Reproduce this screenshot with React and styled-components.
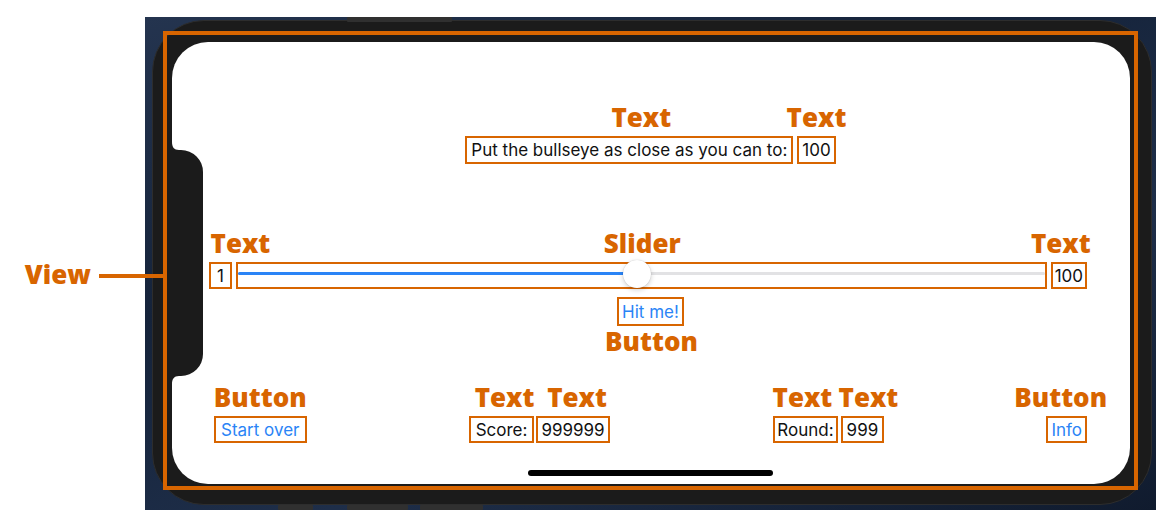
import React from "react";
import styled, { createGlobalStyle } from "styled-components";

const ORANGE = "#d86500";
const BLUE = "#2a84f6";

const GlobalStyle = createGlobalStyle`
  html, body {
    margin: 0;
    padding: 0;
    background: #fff;
  }
  body {
    font-family: "Inter", "Liberation Sans", sans-serif;
  }
`;

const Page = styled.div`
  width: 1156px;
  height: 510px;
  box-sizing: border-box;
  padding: 17px 0 0 145px;
  overflow: hidden;
`;

const Backdrop = styled.div`
  height: 100%;
  box-sizing: border-box;
  padding: 3px 0 0 7px;
  background: linear-gradient(160deg, #24344f 0%, #15233a 35%, #1e2e49 65%, #101b2e 100%);
`;

const Phone = styled.div`
  position: relative;
  width: 1000px;
  height: 485px;
  box-sizing: border-box;
  padding: 10px 13px 14px 10px;
  background: #1b1b1b;
  border: 1px solid #2d2d2d;
  border-radius: 52px;
`;

const SideButton = styled.div`
  position: absolute;
  left: ${(p) => p.$left}px;
  width: ${(p) => p.$width}px;
  height: 5px;
  background: #303030;
  border-radius: 1px;
  ${(p) => (p.$bottom ? "bottom: -6px;" : "top: -4px;")}
`;

const Frame = styled.div`
  position: relative;
  height: 100%;
  box-sizing: border-box;
  padding: 7px 4px 2px 5px;
  border: 4px solid ${ORANGE};
`;

const Screen = styled.div`
  position: relative;
  height: 100%;
  box-sizing: border-box;
  padding: 0 43px 0 42px;
  display: flex;
  flex-direction: column;
  background: #fff;
  border-radius: 36px;
`;

const Notch = styled.svg`
  position: absolute;
  left: 0;
  top: 100px;
`;

const Callout = styled.div`
  position: absolute;
  right: calc(100% + 4px);
  top: 228px;
  display: flex;
  align-items: center;
  gap: 8px;
`;

const CalloutLine = styled.div`
  width: 64px;
  height: 4px;
  background: ${ORANGE};
`;

const Label = styled.span`
  font-family: "Open Sans", "DejaVu Sans", sans-serif;
  font-weight: 800;
  font-size: 26px;
  line-height: 1;
  color: ${ORANGE};
  white-space: nowrap;
`;

const ViewLabel = styled(Label)`
  transform: translateY(-2px);
`;

const FloatLabel = styled(Label)`
  position: absolute;
  left: 50%;
  ${(p) => (p.$below ? "top: calc(100% + 2px);" : "bottom: calc(100% + 6px);")}
  transform: translateX(calc(-50% + ${(p) => p.$shift || 0}px));
`;

const Annotated = styled.div`
  position: relative;
  display: flex;
  flex: ${(p) => (p.$grow ? 1 : "none")};
`;

const Box = styled.span`
  display: inline-flex;
  align-items: center;
  justify-content: center;
  box-sizing: border-box;
  height: ${(p) => p.$h || 27}px;
  padding: 0 ${(p) => (p.$pad == null ? 3 : p.$pad)}px;
  border: 2px solid ${ORANGE};
  font-size: 17px;
  color: ${(p) => (p.$link ? BLUE : "#111")};
  white-space: nowrap;
`;

const TopRow = styled.div`
  display: flex;
  justify-content: center;
  gap: 4px;
  margin-top: 94px;
`;

const SliderRow = styled.div`
  display: flex;
  align-items: center;
  gap: 4px;
  margin: 98px 0 0 -5px;
`;

const HitRow = styled.div`
  display: flex;
  justify-content: center;
  margin-top: 8px;
`;

const BottomRow = styled.div`
  display: flex;
  justify-content: space-between;
  align-items: center;
  margin-top: 90px;
`;

const Pair = styled.div`
  display: flex;
  gap: ${(p) => p.$gap || 2}px;
`;

const SliderBox = styled.div`
  position: relative;
  width: 100%;
  height: 27px;
  box-sizing: border-box;
  border: 2px solid ${ORANGE};
`;

const Track = styled.div`
  position: absolute;
  left: 0;
  right: 0;
  top: 8px;
  height: 3px;
  border-radius: 2px;
  background: #e2e2e4;
`;

const Fill = styled.div`
  position: absolute;
  left: 0;
  top: 0;
  bottom: 0;
  border-radius: 2px;
  background: ${BLUE};
`;

const Thumb = styled.div`
  position: absolute;
  top: -4px;
  width: 28px;
  height: 28px;
  margin-left: -14px;
  border-radius: 50%;
  background: #fff;
  box-shadow: 0 2px 5px rgba(0, 0, 0, 0.18), 0 0 1px rgba(0, 0, 0, 0.25);
  z-index: 1;
`;

const HomeIndicator = styled.div`
  align-self: center;
  width: 245px;
  height: 6px;
  margin-top: 27px;
  border-radius: 3px;
  background: #000;
`;

const Slider = ({ value, min, max }) => {
  const frac = (value - min) / (max - min);
  const pos = `calc(14px + (100% - 28px) * ${frac})`;
  return (
    <SliderBox>
      <Track>
        <Fill style={{ width: pos }} />
      </Track>
      <Thumb style={{ left: pos }} />
    </SliderBox>
  );
};

const App = () => {
  return (
    <Page>
      <GlobalStyle />
      <Backdrop>
        <Phone>
          <SideButton $left={194} $width={105} />
          <SideButton $bottom $left={125} $width={35} />
          <SideButton $bottom $left={194} $width={61} />
          <SideButton $bottom $left={267} $width={63} />
          <Frame>
            <Callout>
              <ViewLabel>View</ViewLabel>
              <CalloutLine />
            </Callout>
            <Screen>
              <Notch width="32" height="242" viewBox="0 0 32 242">
                <path
                  d="M0 0 C0 5 2 8 7 8 L9 8 A22 22 0 0 1 31 30 L31 212 A22 22 0 0 1 9 234 L7 234 C2 234 0 237 0 242 Z"
                  fill="#1b1b1b"
                />
              </Notch>

              <TopRow>
                <Annotated>
                  <FloatLabel $shift={12}>Text</FloatLabel>
                  <Box $h={28} $pad={4}>Put the bullseye as close as you can to:</Box>
                </Annotated>
                <Annotated>
                  <FloatLabel>Text</FloatLabel>
                  <Box $h={28}>100</Box>
                </Annotated>
              </TopRow>

              <SliderRow>
                <Annotated>
                  <FloatLabel $shift={20}>Text</FloatLabel>
                  <Box $pad={6}>1</Box>
                </Annotated>
                <Annotated $grow>
                  <FloatLabel $shift={1}>Slider</FloatLabel>
                  <Slider value={50} min={1} max={100} />
                </Annotated>
                <Annotated>
                  <FloatLabel $shift={-8}>Text</FloatLabel>
                  <Box $pad={2}>100</Box>
                </Annotated>
              </SliderRow>

              <HitRow>
                <Annotated>
                  <FloatLabel $below $shift={1}>Button</FloatLabel>
                  <Box $link $h={29} $pad={3.5}>Hit me!</Box>
                </Annotated>
              </HitRow>

              <BottomRow>
                <Annotated>
                  <FloatLabel>Button</FloatLabel>
                  <Box $link $pad={5}>Start over</Box>
                </Annotated>
                <Pair>
                  <Annotated>
                    <FloatLabel $shift={3}>Text</FloatLabel>
                    <Box $pad={4.5}>Score:</Box>
                  </Annotated>
                  <Annotated>
                    <FloatLabel $shift={4}>Text</FloatLabel>
                    <Box $pad={3.5}>999999</Box>
                  </Annotated>
                </Pair>
                <Pair $gap={3}>
                  <Annotated>
                    <FloatLabel $shift={-3}>Text</FloatLabel>
                    <Box $pad={2.5}>Round:</Box>
                  </Annotated>
                  <Annotated>
                    <FloatLabel $shift={6}>Text</FloatLabel>
                    <Box $pad={3.5}>999</Box>
                  </Annotated>
                </Pair>
                <Annotated>
                  <FloatLabel $shift={-6}>Button</FloatLabel>
                  <Box $link $pad={3}>Info</Box>
                </Annotated>
              </BottomRow>

              <HomeIndicator />
            </Screen>
          </Frame>
        </Phone>
      </Backdrop>
    </Page>
  );
};

export default App;
